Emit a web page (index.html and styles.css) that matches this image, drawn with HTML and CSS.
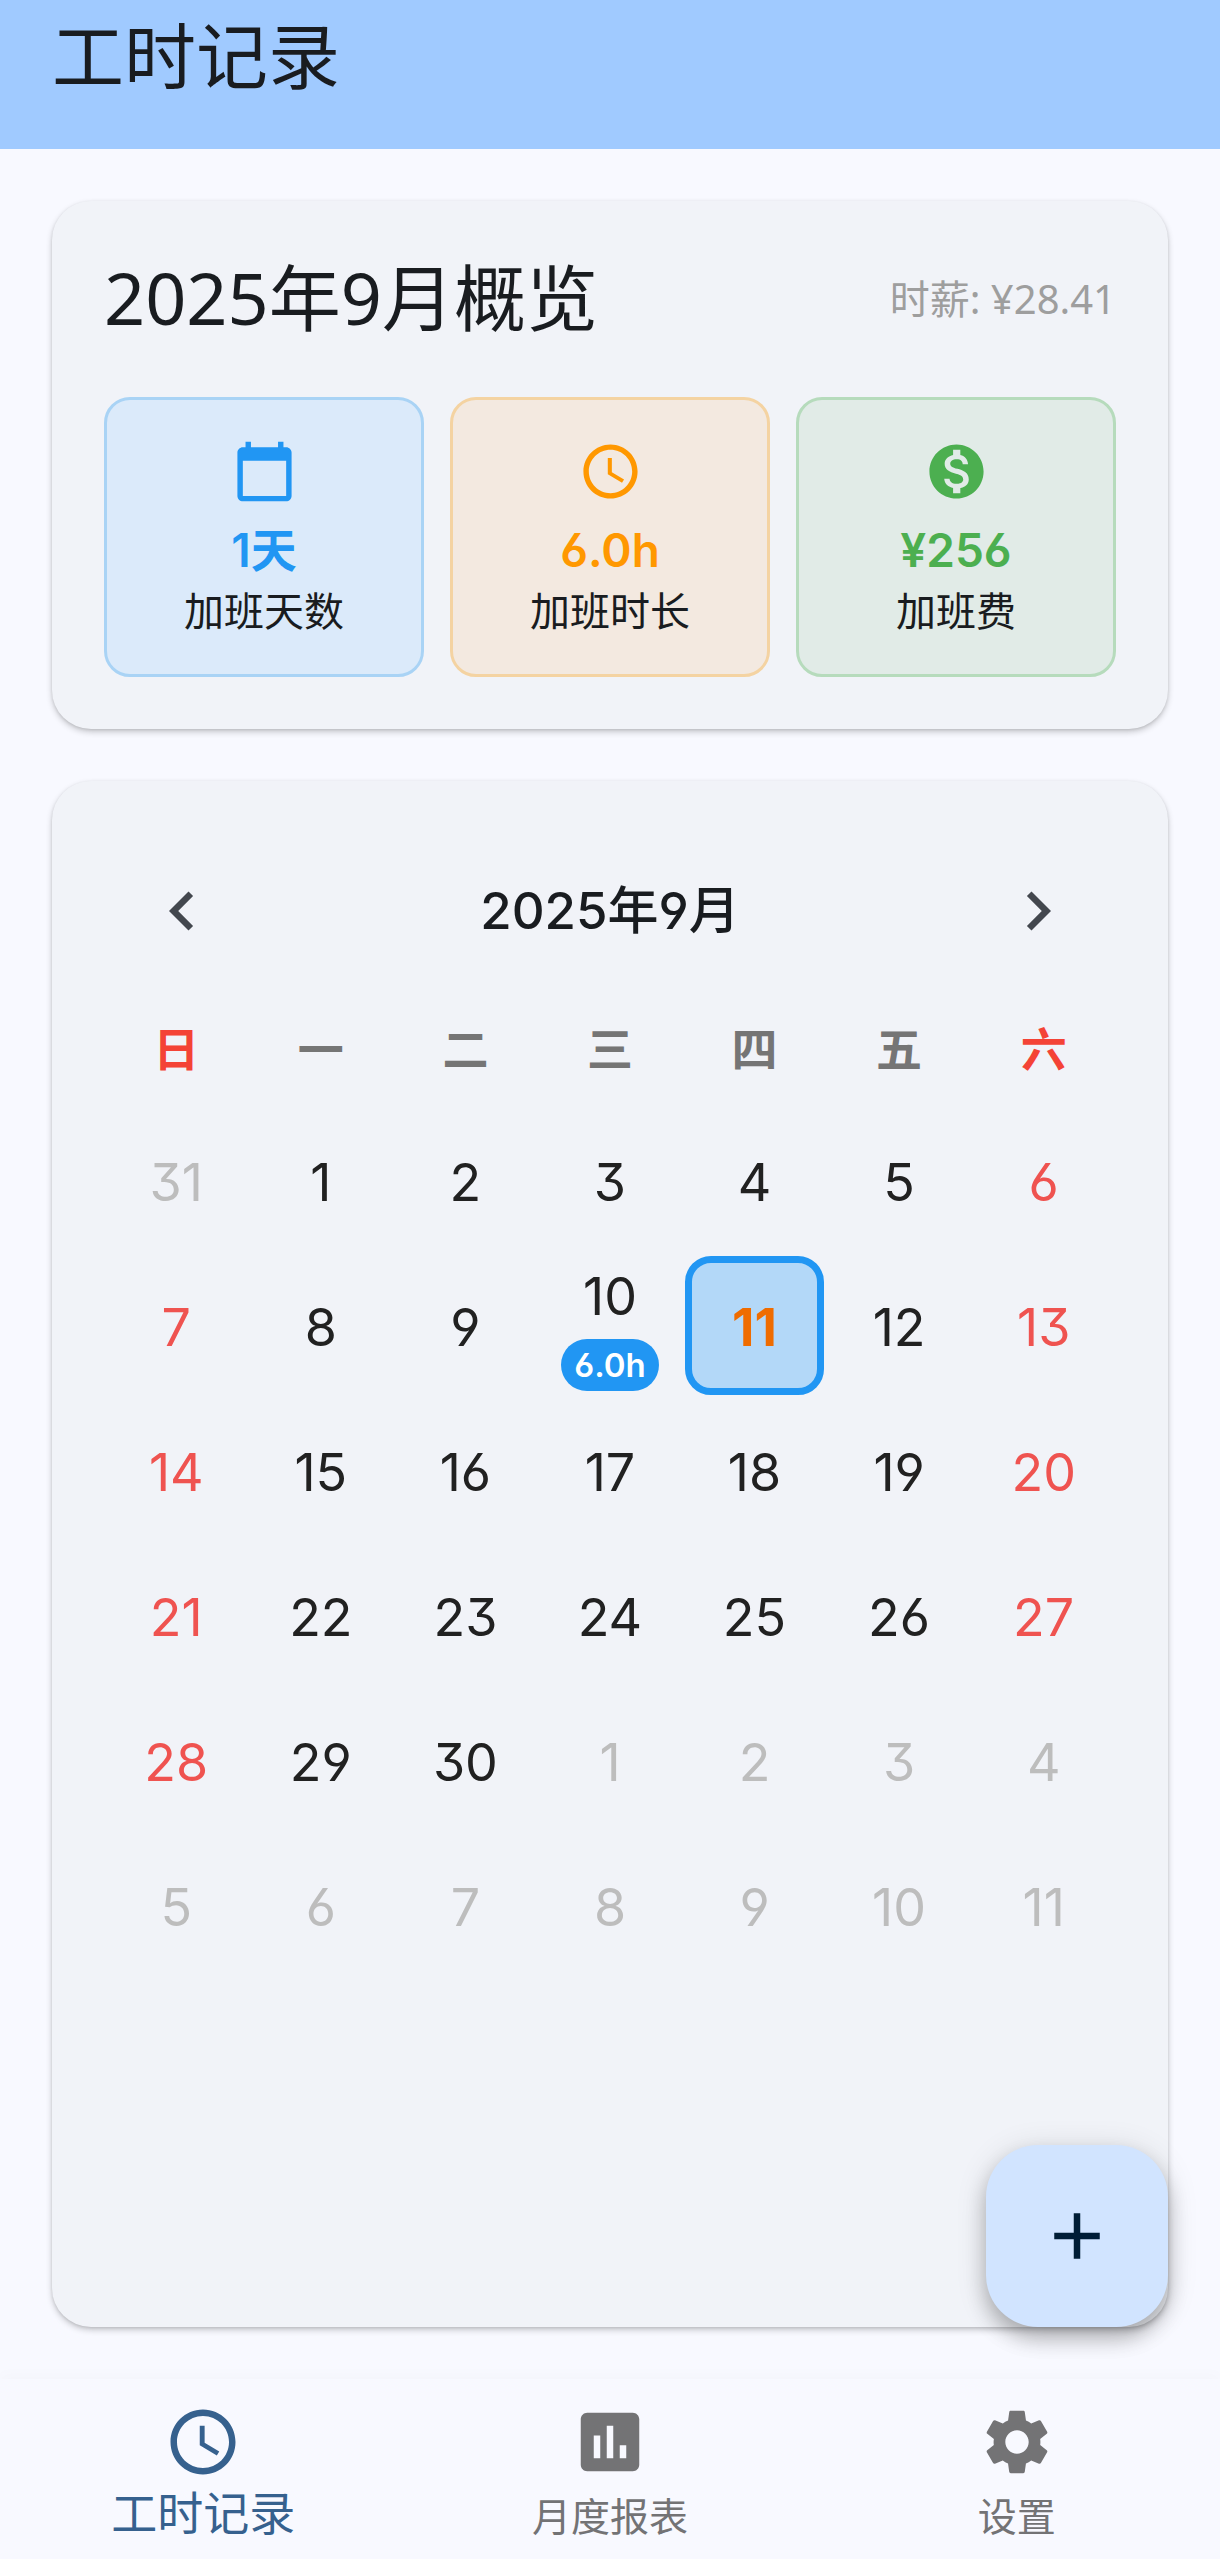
FILE: index.html
```html
<!DOCTYPE html>
<html lang="zh-CN">
<head>
<meta charset="utf-8">
<meta name="viewport" content="width=device-width, initial-scale=1">
<title>工时记录</title>
<link rel="stylesheet" href="styles.css">
</head>
<body>
<header class="app-bar">
  <h1 class="app-title">工时记录</h1>
</header>

<main class="content">
  <section class="card">
    <div class="overview-head">
      <h2 class="overview-title">2025年9月概览</h2>
      <p class="rate">时薪: ¥28.41</p>
    </div>
    <ul class="stats">
      <li class="stat stat-days">
        <svg class="stat-icon" viewBox="0 0 24 24" aria-hidden="true"><path d="M20 3h-1V1h-2v2H7V1H5v2H4c-1.1 0-2 .9-2 2v16c0 1.1.9 2 2 2h16c1.1 0 2-.9 2-2V5c0-1.1-.9-2-2-2zm0 18H4V8h16v13z"/></svg>
        <strong class="stat-value">1天</strong>
        <span class="stat-label">加班天数</span>
      </li>
      <li class="stat stat-hours">
        <svg class="stat-icon" viewBox="0 0 24 24" aria-hidden="true"><path d="M11.99 2C6.47 2 2 6.48 2 12s4.47 10 9.99 10C17.52 22 22 17.52 22 12S17.52 2 11.99 2zM12 20c-4.42 0-8-3.58-8-8s3.58-8 8-8 8 3.58 8 8-3.58 8-8 8zm.5-13H11v6l5.25 3.15.75-1.23-4.5-2.67z"/></svg>
        <strong class="stat-value">6.0h</strong>
        <span class="stat-label">加班时长</span>
      </li>
      <li class="stat stat-pay">
        <svg class="stat-icon" viewBox="0 0 24 24" aria-hidden="true"><path d="M12 2C6.48 2 2 6.48 2 12s4.48 10 10 10 10-4.48 10-10S17.52 2 12 2zm1.41 16.09V20h-2.67v-1.93c-1.71-.36-3.16-1.46-3.27-3.4h1.96c.1 1.05.82 1.87 2.65 1.87 1.96 0 2.4-.98 2.4-1.59 0-.83-.44-1.61-2.67-2.14-2.48-.6-4.18-1.62-4.18-3.67 0-1.72 1.39-2.84 3.11-3.21V4h2.67v1.95c1.86.45 2.79 1.86 2.85 3.39H14.3c-.05-1.11-.64-1.87-2.22-1.87-1.5 0-2.4.68-2.4 1.64 0 .84.65 1.39 2.67 1.91s4.18 1.39 4.18 3.91c-.01 1.83-1.38 2.83-3.12 3.16z"/></svg>
        <strong class="stat-value">¥256</strong>
        <span class="stat-label">加班费</span>
      </li>
    </ul>
  </section>

  <section class="card calendar-card">
    <div class="month-bar">
      <button class="month-btn" type="button" aria-label="上个月"><svg class="icon" viewBox="0 0 24 24" aria-hidden="true"><path d="M15.41 7.41L14 6l-6 6 6 6 1.41-1.41L10.83 12z"/></svg></button>
      <h2 class="month-title">2025年9月</h2>
      <button class="month-btn" type="button" aria-label="下个月"><svg class="icon" viewBox="0 0 24 24" aria-hidden="true"><path d="M10 6L8.59 7.41 13.17 12l-4.58 4.59L10 18l6-6z"/></svg></button>
    </div>
    <table class="calendar">
      <thead>
        <tr><th class="off">日</th><th>一</th><th>二</th><th>三</th><th>四</th><th>五</th><th class="off">六</th></tr>
      </thead>
      <tbody>
        <tr>
          <td><button type="button" class="day out">31</button></td>
          <td><button type="button" class="day">1</button></td>
          <td><button type="button" class="day">2</button></td>
          <td><button type="button" class="day">3</button></td>
          <td><button type="button" class="day">4</button></td>
          <td><button type="button" class="day">5</button></td>
          <td><button type="button" class="day weekend">6</button></td>
        </tr>
        <tr>
          <td><button type="button" class="day weekend">7</button></td>
          <td><button type="button" class="day">8</button></td>
          <td><button type="button" class="day">9</button></td>
          <td><button type="button" class="day">10<span class="hours">6.0h</span></button></td>
          <td><button type="button" class="day selected" aria-pressed="true">11</button></td>
          <td><button type="button" class="day">12</button></td>
          <td><button type="button" class="day weekend">13</button></td>
        </tr>
        <tr>
          <td><button type="button" class="day weekend">14</button></td>
          <td><button type="button" class="day">15</button></td>
          <td><button type="button" class="day">16</button></td>
          <td><button type="button" class="day">17</button></td>
          <td><button type="button" class="day">18</button></td>
          <td><button type="button" class="day">19</button></td>
          <td><button type="button" class="day weekend">20</button></td>
        </tr>
        <tr>
          <td><button type="button" class="day weekend">21</button></td>
          <td><button type="button" class="day">22</button></td>
          <td><button type="button" class="day">23</button></td>
          <td><button type="button" class="day">24</button></td>
          <td><button type="button" class="day">25</button></td>
          <td><button type="button" class="day">26</button></td>
          <td><button type="button" class="day weekend">27</button></td>
        </tr>
        <tr>
          <td><button type="button" class="day weekend">28</button></td>
          <td><button type="button" class="day">29</button></td>
          <td><button type="button" class="day">30</button></td>
          <td><button type="button" class="day out">1</button></td>
          <td><button type="button" class="day out">2</button></td>
          <td><button type="button" class="day out">3</button></td>
          <td><button type="button" class="day out">4</button></td>
        </tr>
        <tr>
          <td><button type="button" class="day out">5</button></td>
          <td><button type="button" class="day out">6</button></td>
          <td><button type="button" class="day out">7</button></td>
          <td><button type="button" class="day out">8</button></td>
          <td><button type="button" class="day out">9</button></td>
          <td><button type="button" class="day out">10</button></td>
          <td><button type="button" class="day out">11</button></td>
        </tr>
      </tbody>
    </table>
  </section>

  <button class="fab" type="button" aria-label="添加记录"><svg class="icon" viewBox="0 0 24 24" aria-hidden="true"><path d="M19 13h-6v6h-2v-6H5v-2h6V5h2v6h6v2z"/></svg></button>
</main>

<nav class="tabs">
  <a class="tab active" href="#records" aria-current="page">
    <svg class="icon" viewBox="0 0 24 24" aria-hidden="true"><path d="M11.99 2C6.47 2 2 6.48 2 12s4.47 10 9.99 10C17.52 22 22 17.52 22 12S17.52 2 11.99 2zM12 20c-4.42 0-8-3.58-8-8s3.58-8 8-8 8 3.58 8 8-3.58 8-8 8zm.5-13H11v6l5.25 3.15.75-1.23-4.5-2.67z"/></svg>
    <span class="tab-label">工时记录</span>
  </a>
  <a class="tab" href="#report">
    <svg class="icon" viewBox="0 0 24 24" aria-hidden="true"><path d="M19 3H5c-1.1 0-2 .9-2 2v14c0 1.1.9 2 2 2h14c1.1 0 2-.9 2-2V5c0-1.1-.9-2-2-2zM9 17H7v-7h2v7zm4 0h-2V7h2v10zm4 0h-2v-4h2v4z"/></svg>
    <span class="tab-label">月度报表</span>
  </a>
  <a class="tab" href="#settings">
    <svg class="icon" viewBox="0 0 24 24" aria-hidden="true"><path d="M19.14 12.94c.04-.3.06-.61.06-.94 0-.32-.02-.64-.07-.94l2.03-1.58c.18-.14.23-.41.12-.61l-1.92-3.32c-.12-.22-.37-.29-.59-.22l-2.39.96c-.5-.38-1.03-.7-1.62-.94l-.36-2.54c-.04-.24-.24-.41-.48-.41h-3.84c-.24 0-.43.17-.47.41l-.36 2.54c-.59.24-1.13.57-1.62.94l-2.39-.96c-.22-.08-.47 0-.59.22L2.74 8.87c-.12.21-.08.47.12.61l2.03 1.58c-.05.3-.09.63-.09.94s.02.64.07.94l-2.03 1.58c-.18.14-.23.41-.12.61l1.92 3.32c.12.22.37.29.59.22l2.39-.96c.5.38 1.03.7 1.62.94l.36 2.54c.05.24.24.41.48.41h3.84c.24 0 .44-.17.47-.41l.36-2.54c.59-.24 1.13-.56 1.62-.94l2.39.96c.22.08.47 0 .59-.22l1.92-3.32c.12-.22.07-.47-.12-.61l-2.01-1.58zM12 15.6c-1.98 0-3.6-1.62-3.6-3.6s1.62-3.6 3.6-3.6 3.6 1.62 3.6 3.6-1.62 3.6-3.6 3.6z"/></svg>
    <span class="tab-label">设置</span>
  </a>
</nav>
</body>
</html>
```
FILE: styles.css
```css
*,
*::before,
*::after {
  box-sizing: border-box;
}

:root {
  --surface: #f8f9ff;
  --card: #f1f3f8;
  --ink: #191c20;
  --digits: Inter, "Noto Sans CJK SC", sans-serif;
}

body {
  margin: 0;
  min-height: 100vh;
  display: flex;
  flex-direction: column;
  background: var(--surface);
  color: var(--ink);
  font-family: "Noto Sans", "Noto Sans CJK SC", sans-serif;
  font-size: 40px;
  /* Inter: straight-stemmed six and nine, flat-topped three */
  font-feature-settings: "cv03", "cv04", "cv09";
}

h1,
h2,
p,
ul {
  margin: 0;
  padding: 0;
  font-weight: 400;
  list-style: none;
}

button {
  padding: 0;
  border: 0;
  background: none;
  color: inherit;
  font: inherit;
  font-feature-settings: inherit;
  cursor: pointer;
}

.icon {
  display: block;
  width: 78px;
  height: 78px;
  fill: currentColor;
}

.app-bar {
  padding: 0 52px 39px;
  background: #a0caff;
}

.app-title {
  font-size: 72px;
  line-height: 110px;
}

.content {
  position: relative;
  flex: 1;
  display: flex;
  flex-direction: column;
  gap: 52px;
  padding: 52px;
}

.card {
  padding: 52px;
  border-radius: 39px;
  background: var(--card);
  box-shadow: 0 3px 6px rgba(0, 0, 0, 0.2), 0 1px 3px rgba(0, 0, 0, 0.1);
}

.overview-head {
  display: flex;
  align-items: center;
  justify-content: space-between;
  margin-bottom: 56px;
}

.overview-title {
  font-size: 72px;
  line-height: 88px;
}

.rate {
  color: #9e9e9e;
}

.stats {
  display: grid;
  grid-template-columns: repeat(3, 1fr);
  gap: 26px;
}

.stat {
  display: flex;
  flex-direction: column;
  align-items: center;
  padding: 39px 39px 35px;
  border: 3px solid;
  border-radius: 26px;
}

.stat-days {
  background: #dbeafa;
  border-color: #a9d3f5;
  color: #2196f3;
}

.stat-hours {
  background: #f3e9e0;
  border-color: #f4d3a2;
  color: #ff9800;
}

.stat-pay {
  background: #e1ebe7;
  border-color: #b6dbbc;
  color: #4caf50;
}

.stat-icon {
  width: 65px;
  height: 65px;
  margin-bottom: 13px;
  fill: currentColor;
}

.stat-value {
  font-family: var(--digits);
  font-size: 46px;
  font-weight: 600;
  line-height: 66px;
}

.stat-label {
  color: var(--ink);
  line-height: 56px;
  white-space: nowrap;
}

.calendar-card {
  flex: 1;
}

.month-bar {
  display: flex;
  align-items: center;
  justify-content: space-between;
  padding: 39px;
  color: #43474e;
}

.month-title {
  color: var(--ink);
  font-family: var(--digits);
  font-size: 51px;
  font-weight: 500;
  line-height: 78px;
}

.calendar {
  width: 100%;
  border-collapse: collapse;
  table-layout: fixed;
}

.calendar th {
  height: 119px;
  padding: 0 0 6px;
  color: #757575;
  font-size: 46px;
  font-weight: 700;
}

.calendar .off {
  color: #f44336;
}

.calendar td {
  height: 145px;
  padding: 3px;
}

.day {
  display: flex;
  flex-direction: column;
  align-items: center;
  justify-content: center;
  gap: 10px;
  width: 100%;
  height: 139px;
  padding-top: 5px;
  border-radius: 26px;
  color: #212121;
  font-family: var(--digits);
  font-size: 52px;
  line-height: 64px;
}

.weekend {
  color: #ef5350;
}

.out {
  color: #bdbdbd;
}

.selected {
  border: 7px solid #2196f3;
  background: #b3d8f8;
  color: #ef6c00;
  font-weight: 700;
}

.hours {
  padding: 0 13px;
  border-radius: 26px;
  background: #2196f3;
  color: #fff;
  font-size: 33px;
  font-weight: 600;
  line-height: 52px;
}

.fab {
  position: absolute;
  right: 52px;
  bottom: 52px;
  display: grid;
  place-items: center;
  width: 182px;
  height: 182px;
  border-radius: 52px;
  background: #d1e4ff;
  color: #001d36;
  box-shadow: 0 12px 20px rgba(0, 0, 0, 0.24), 0 4px 32px rgba(0, 0, 0, 0.12);
}

.tabs {
  position: relative;
  display: grid;
  grid-template-columns: repeat(3, 1fr);
  background: var(--surface);
  box-shadow: 0 -4px 14px rgba(0, 0, 0, 0.02);
}

.tab {
  display: flex;
  flex-direction: column;
  align-items: center;
  padding: 24px 0 12px;
  color: #737375;
  text-decoration: none;
}

.tab-label {
  padding-top: 4px;
  font-size: 39px;
  line-height: 62px;
}

.active {
  color: #36618e;
}

.active .tab-label {
  padding: 0;
  font-size: 46px;
}
```
